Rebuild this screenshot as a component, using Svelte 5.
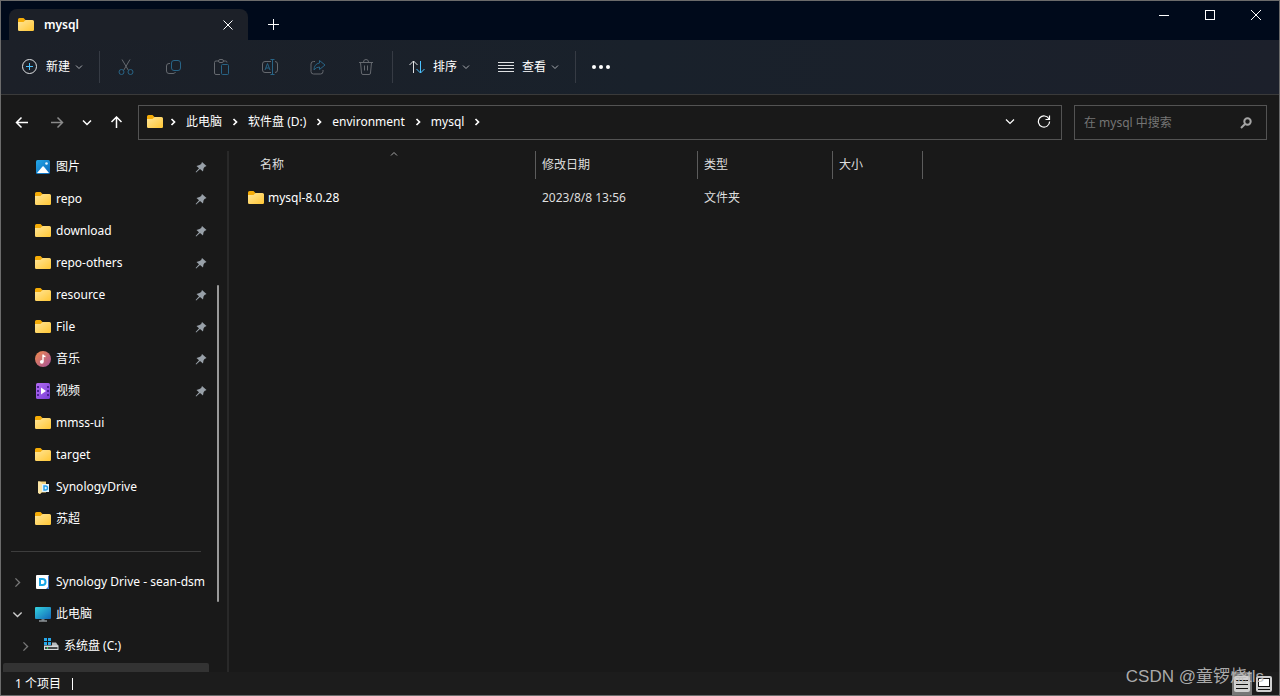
<script lang="ts">
  interface NavItem {
    name: string;
    icon: string;
    pinned?: boolean;
    tree?: 'closed' | 'open';
    nested?: boolean;
  }

  const quickAccess: NavItem[] = [
    { name: '图片', icon: 'pictures', pinned: true },
    { name: 'repo', icon: 'folder', pinned: true },
    { name: 'download', icon: 'folder', pinned: true },
    { name: 'repo-others', icon: 'folder', pinned: true },
    { name: 'resource', icon: 'folder', pinned: true },
    { name: 'File', icon: 'folder', pinned: true },
    { name: '音乐', icon: 'music', pinned: true },
    { name: '视频', icon: 'video', pinned: true },
    { name: 'mmss-ui', icon: 'folder' },
    { name: 'target', icon: 'folder' },
    { name: 'SynologyDrive', icon: 'synofolder' },
    { name: '苏超', icon: 'folder' }
  ];

  const drives: NavItem[] = [
    { name: 'Synology Drive - sean-dsm', icon: 'synology', tree: 'closed' },
    { name: '此电脑', icon: 'pc', tree: 'open' },
    { name: '系统盘 (C:)', icon: 'disk', tree: 'closed', nested: true }
  ];

  const crumbs = ['此电脑', '软件盘 (D:)', 'environment', 'mysql'];

  const actions = [
    { id: 'cut', label: '剪切' },
    { id: 'copy', label: '复制' },
    { id: 'paste', label: '粘贴' },
    { id: 'rename', label: '重命名' },
    { id: 'share', label: '共享' },
    { id: 'delete', label: '删除' }
  ];

  const files = [{ name: 'mysql-8.0.28', modified: '2023/8/8 13:56', type: '文件夹', size: '' }];

  let query = $state('');
</script>

{#snippet chevron(dir: string)}
  <svg class="chevron {dir}" viewBox="0 0 8 8" aria-hidden="true"><path d="M1 2.5 4 5.5 7 2.5" /></svg>
{/snippet}

{#snippet icon(name: string)}
  <svg class="icon" viewBox="0 0 16 16" aria-hidden="true">
    {#if name === 'folder'}
      <path d="M0 2.500A1.500 1.500 0 0 1 1.500 1h4L7.500 3v3H0z" fill="#f5ac07" />
      <path d="M0 5h5.500l2-2h7A1.500 1.500 0 0 1 16 4.500v8.300a1.200 1.200 0 0 1-1.200 1.200H1.200A1.200 1.200 0 0 1 0 12.800z" fill="url(#folder-fill)" />
    {:else if name === 'pictures'}
      <rect x="1" y="1" width="14" height="14" rx="1.500" fill="url(#sky-fill)" />
      <path d="m2 14 5.500-6.500a.8.8 0 0 1 1.200 0L14 14z" fill="#fff" />
      <circle cx="11.500" cy="4.500" r="1.300" fill="#e8f6ff" />
    {:else if name === 'music'}
      <circle cx="8" cy="8" r="8" fill="url(#music-fill)" />
      <path d="M8 3.500v7M8 3.500q0 2 2.500 2" fill="none" stroke="#fff" stroke-width="1.400" />
      <circle cx="6.800" cy="10.800" r="1.900" fill="#fff" />
    {:else if name === 'video'}
      <rect x="1" y="0" width="14" height="16" rx="1.500" fill="url(#video-fill)" />
      <path d="M2 4h2M2 8h2M2 12h2M12 4h2M12 8h2M12 12h2" stroke="#4d2394" stroke-width="2" />
      <path d="m6 4.500 5 3.500-5 3.500z" fill="#fff" />
    {:else if name === 'synofolder'}
      <path d="M3 2.500h8v11H6L5 15l-2-1.500z" fill="#f4d27b" />
      <path d="M3 2.500h2L7 4v9l-2 2-2-1z" fill="#fbe5a5" />
      <rect x="7" y="5" width="7" height="8" fill="#e5f3fc" />
      <path d="M9 7h1.500q2 0 2 2t-2 2H9z" fill="none" stroke="#229ee8" stroke-width="1.400" />
    {:else if name === 'synology'}
      <rect x="1" y="1" width="13" height="14" rx="1" fill="#fff" />
      <path d="M13 2v11l-2 2h2q1 0 1-1V2z" fill="#3d74cb" />
      <path d="M5 5h2.500q3 0 3 3t-3 3H5z" fill="none" stroke="#19a6e6" stroke-width="2" />
    {:else if name === 'pc'}
      <rect x="0" y="1" width="16" height="12" rx="1" fill="url(#screen-fill)" />
      <path d="M6.500 13h3v1.500h-3z" fill="#6d7a83" />
      <path d="M4 15h8" stroke="#c7d0d6" />
    {:else if name === 'disk'}
      <path d="M1 0h3v3H1zM5 0h3v3H5zM1 4h3v3H1zM5 4h3v3H5z" fill="#28a8ea" />
      <path d="M9 4.500h4l2.500 3.500H9z" fill="#b4b8bb" />
      <path d="M1 7.500h14.500V12H1z" fill="#d7dadc" />
      <path d="M2 9h12.500v2H2z" fill="#46494b" />
      <path d="M4 9h1v2H4z" fill="#3fd95b" />
    {/if}
  </svg>
{/snippet}

{#snippet actionIcon(name: string)}
  <svg class="tool" viewBox="0 0 16 16" aria-hidden="true">
    {#if name === 'cut'}
      <path d="m4 .5 6.500 11M12 .5 5.500 11.500" />
      <g class="accent"><circle cx="3.500" cy="13" r="2.500" /><circle cx="12.500" cy="13" r="2.500" /></g>
    {:else if name === 'copy'}
      <path d="M4 4.500H3A2.500 2.500 0 0 0 .5 7v5A2.500 2.500 0 0 0 3 14.500h4A2.500 2.500 0 0 0 9.500 13" />
      <rect class="accent" x="5.500" y="1.500" width="9" height="10" rx="2.500" />
    {:else if name === 'paste'}
      <path d="M6 15.500H2A1.500 1.500 0 0 1 .5 14V3.500A1.500 1.500 0 0 1 2 2h2.500m5 0h2A1.500 1.500 0 0 1 13 3.500" />
      <rect x="4.500" y=".5" width="5" height="3" rx="1.500" />
      <rect class="accent" x="7.500" y="5.500" width="7" height="10" rx="1" />
    {:else if name === 'rename'}
      <path d="M9 2.500H3A2.500 2.500 0 0 0 .5 5v6A2.500 2.500 0 0 0 3 13.500h6m4-11A2.500 2.500 0 0 1 15.500 5v6a2.500 2.500 0 0 1-2.500 2.500" />
      <path class="accent" d="m3 11 2.500-6.500L8 11M4 9h3M10.500 .5v15M8.500 .5h4M8.500 15.500h4" />
    {:else if name === 'share'}
      <path d="M5 2.500H3.500A2.500 2.500 0 0 0 1 5v7.500A2.500 2.500 0 0 0 3.500 15h7a2.500 2.500 0 0 0 2.500-2.500V11" />
      <path class="accent" d="M9.500 1.500 15 6l-5.500 4.500V8Q6 8 4 11q0-6 5.500-7z" />
    {:else if name === 'delete'}
      <path d="M1 3.500h14M5.500 3Q5.500.5 8 .5T10.500 3M2.500 3.500l1 10.500A1.500 1.500 0 0 0 5 15.500h6a1.500 1.500 0 0 0 1.500-1.500l1-10.500M6.500 6.500v5M9.500 6.500v5" />
    {/if}
  </svg>
{/snippet}

{#snippet navRow(item: NavItem)}
  <li>
    <button class="nav-row" class:nested={item.nested}>
      <span class="twisty" class:open={item.tree === 'open'}>
        {#if item.tree}{@render chevron(item.tree === 'open' ? 'down' : 'right')}{/if}
      </span>
      {@render icon(item.icon)}
      <span class="nav-name">{item.name}</span>
      {#if item.pinned}
        <svg class="pin" viewBox="0 0 12 12" aria-hidden="true">
          <path d="M7 1 11.500 5 9.500 6 8.500 7.500 8 10.500 5 8 1.200 11.500.6 11 4 7.200 1.500 5 4.500 4 6.200 3z" />
        </svg>
      {/if}
    </button>
  </li>
{/snippet}

<svg class="defs" aria-hidden="true">
  <defs>
    <linearGradient id="folder-fill" x1="0" y1="0" x2="1" y2="1">
      <stop offset="0" stop-color="#ffe69a" /><stop offset="1" stop-color="#ffc634" />
    </linearGradient>
    <linearGradient id="sky-fill" x1="0" y1="0" x2="1" y2="1">
      <stop offset="0" stop-color="#24a8e8" /><stop offset="1" stop-color="#0c66b8" />
    </linearGradient>
    <linearGradient id="music-fill" x1="0" y1="0" x2="1" y2="1">
      <stop offset="0" stop-color="#f08a4b" /><stop offset="1" stop-color="#a5529b" />
    </linearGradient>
    <linearGradient id="video-fill" x1="0" y1="0" x2="1" y2="1">
      <stop offset="0" stop-color="#b36bf2" /><stop offset="1" stop-color="#7a3fd6" />
    </linearGradient>
    <linearGradient id="screen-fill" x1="0" y1="0" x2="1" y2="1">
      <stop offset="0" stop-color="#35d3df" /><stop offset="1" stop-color="#1267b8" />
    </linearGradient>
  </defs>
</svg>

<div class="window">
  <header class="titlebar">
    <div class="tab">
      {@render icon('folder')}
      <span class="tab-title">mysql</span>
      <button class="tab-close" aria-label="关闭标签页">
        <svg class="glyph" viewBox="0 0 10 10"><path d="m.5.5 9 9M9.500.5l-9 9" /></svg>
      </button>
    </div>
    <button class="tab-add" aria-label="新标签页">
      <svg class="glyph wide" viewBox="0 0 11 11"><path d="M5.500 0v11M0 5.500h11" /></svg>
    </button>
    <div class="window-controls">
      <button aria-label="最小化"><svg class="glyph" viewBox="0 0 10 10"><path d="M0 5.500h10" /></svg></button>
      <button aria-label="最大化"><svg class="glyph" viewBox="0 0 10 10"><rect x=".5" y=".5" width="9" height="9" /></svg></button>
      <button aria-label="关闭"><svg class="glyph" viewBox="0 0 10 10"><path d="m0 0 10 10M10 0 0 10" /></svg></button>
    </div>
  </header>

  <div class="toolbar">
    <button class="menu">
      <svg class="tool on" viewBox="0 0 16 16" aria-hidden="true">
        <circle cx="7.500" cy="7.500" r="7" /><path class="accent" d="M7.500 4v7M4 7.500h7" />
      </svg>
      新建 {@render chevron('down')}
    </button>
    <span class="split"></span>
    <div class="actions">
      {#each actions as action}
        <button class="action" disabled aria-label={action.label} title={action.label}>{@render actionIcon(action.id)}</button>
      {/each}
    </div>
    <span class="split"></span>
    <button class="menu">
      <svg class="tool on" viewBox="0 0 16 16" aria-hidden="true">
        <path d="M4.500 2v12M.5 6l4-4 4 4" /><path class="accent" d="M11.500 2v12M7.500 10l4 4 4-4" />
      </svg>
      排序 {@render chevron('down')}
    </button>
    <button class="menu view">
      <svg class="tool on" viewBox="0 0 16 16" aria-hidden="true"><path d="M0 3.500h16M0 6.500h16M0 9.500h16M0 12.500h16" /></svg>
      查看 {@render chevron('down')}
    </button>
    <span class="split"></span>
    <button class="more" aria-label="查看更多"><i></i><i></i><i></i></button>
  </div>

  <div class="location">
    <nav class="history" aria-label="导航">
      <button aria-label="后退"><svg class="arrow" viewBox="0 0 14 14"><path d="M13 6.500H1.500M6.500 1.500l-5 5 5 5" /></svg></button>
      <button class="dim" aria-label="前进"><svg class="arrow" viewBox="0 0 14 14"><path d="M1 6.500h11.500M7.500 1.500l5 5-5 5" /></svg></button>
      <button class="recent" aria-label="最近浏览的位置"><svg class="arrow" viewBox="0 0 14 14"><path d="m3 4.500 4 4 4-4" /></svg></button>
      <button aria-label="上移"><svg class="arrow" viewBox="0 0 14 14"><path d="M6.500 12V1M1.500 6l5-5 5 5" /></svg></button>
    </nav>
    <div class="address">
      {@render icon('folder')}
      {@render chevron('right')}
      {#each crumbs as crumb}
        <button class="crumb">{crumb}</button>
        {@render chevron('right')}
      {/each}
      <div class="address-tools">
        <button aria-label="以前的位置"><svg class="arrow thin" viewBox="0 0 14 14"><path d="m3 4.500 4 4 4-4" /></svg></button>
        <button aria-label="刷新">
          <svg class="arrow thin" viewBox="0 0 14 14"><path d="M12 4A5.600 5.600 0 1 0 12.600 6.500M12.500 .5v4h-4" /></svg>
        </button>
      </div>
    </div>
    <label class="search">
      <input type="text" placeholder="在 mysql 中搜索" aria-label="搜索" bind:value={query} />
      <svg class="lens" viewBox="0 0 12 12" aria-hidden="true"><circle cx="7.500" cy="4.500" r="3.200" /><path d="M5 7 1 11" /></svg>
    </label>
  </div>

  <div class="body">
    <aside class="sidebar">
      <div class="nav">
        <ul>
          {#each quickAccess as item}{@render navRow(item)}{/each}
        </ul>
        <hr />
        <ul>
          {#each drives as item}{@render navRow(item)}{/each}
        </ul>
        <div class="selected-row"></div>
      </div>
      <div class="scrollbar"></div>
    </aside>

    <main class="content">
      <table>
        <colgroup><col class="c-name" /><col class="c-date" /><col class="c-type" /><col class="c-size" /></colgroup>
        <thead>
          <tr>
            <th aria-sort="ascending">名称 {@render chevron('up')}</th>
            <th>修改日期</th>
            <th>类型</th>
            <th>大小</th>
          </tr>
        </thead>
        <tbody>
          {#each files as file}
            <tr>
              <td><a class="file" href="#{file.name}">{@render icon('folder')}{file.name}</a></td>
              <td>{file.modified}</td>
              <td>{file.type}</td>
              <td>{file.size}</td>
            </tr>
          {/each}
        </tbody>
      </table>
    </main>
  </div>

  <footer class="status">
    <span class="count">1 个项目</span>
    <span class="caret"></span>
    <div class="views">
      <button class="active" aria-label="详细信息">
        <svg viewBox="0 0 16 16"><rect width="16" height="16" rx="2" fill="#d0d0d0" /><path d="M2 4.500h12M2 8.500h12M2 12.500h12" stroke="#111" /></svg>
      </button>
      <button aria-label="大缩略图">
        <svg viewBox="0 0 16 16"><rect width="16" height="16" rx="2" fill="#d0d0d0" /><rect x="2.500" y="2.500" width="11" height="8" fill="#fff" stroke="#111" /><path d="M2 13.500h12" stroke="#111" /></svg>
      </button>
    </div>
  </footer>

  <span class="watermark">CSDN @童锣烧tls</span>
</div>

<style>
  :global(body) {
    margin: 0;
    background: #191919;
  }

  .window {
    position: relative;
    box-sizing: border-box;
    height: 100vh;
    display: flex;
    flex-direction: column;
    border: 1px solid #6b6b6b;
    background: #191919;
    color: #fff;
    font: 12px/16px "Noto Sans", "Noto Sans CJK SC", sans-serif;
    overflow: hidden;
  }

  button {
    display: flex;
    align-items: center;
    padding: 0;
    border: 0;
    background: none;
    color: inherit;
    font: inherit;
  }

  svg {
    flex: none;
    display: block;
  }

  .defs {
    position: absolute;
    width: 0;
    height: 0;
  }

  .icon,
  .tool {
    width: 16px;
    height: 16px;
  }

  .chevron,
  .tool,
  .glyph,
  .arrow,
  .lens {
    fill: none;
    stroke: currentColor;
  }

  .chevron {
    width: 8px;
    height: 8px;
  }

  .chevron.right {
    transform: rotate(-90deg);
  }

  .chevron.up {
    transform: rotate(180deg);
  }

  /* title bar */
  .titlebar {
    display: flex;
    align-items: flex-end;
    height: 39px;
    background: #000a1b;
  }

  .tab {
    display: flex;
    align-items: center;
    gap: 10px;
    box-sizing: border-box;
    width: 239px;
    height: 31px;
    margin-left: 8px;
    padding: 0 15px 0 9px;
    border-radius: 8px 8px 0 0;
    background: #1c2028;
  }

  .tab-title {
    flex: 1;
    font-weight: 600;
  }

  .glyph {
    width: 10px;
    height: 10px;
  }

  .glyph.wide {
    width: 11px;
    height: 11px;
  }

  .tab-add {
    height: 31px;
    margin-left: 20px;
  }

  .window-controls {
    display: flex;
    align-self: flex-start;
    margin-left: auto;
  }

  .window-controls button {
    justify-content: center;
    width: 46px;
    height: 28px;
  }

  /* command bar */
  .toolbar {
    display: flex;
    align-items: center;
    height: 54px;
    border-bottom: 1px solid #3a3a3a;
    background: linear-gradient(90deg, #1c2028, #19212b 50%, #1c202b);
  }

  .menu {
    gap: 8px;
    margin: 0 16px 0 21px;
  }

  .menu .chevron {
    margin-left: -3px;
    color: #a8abb0;
  }

  .menu.view {
    margin-left: 12px;
  }

  .split {
    width: 1px;
    height: 32px;
    background: #363b44;
  }

  .split + .menu {
    margin-left: 16px;
  }

  .actions {
    display: flex;
    gap: 16px;
    padding: 0 10px;
  }

  .action {
    justify-content: center;
    width: 32px;
    height: 32px;
    color: #65696f;
  }

  .accent {
    stroke: #286486;
  }

  .tool.on {
    color: #dfe1e3;
  }

  .tool.on .accent {
    stroke: #4cc2ff;
  }

  .more {
    gap: 3px;
    margin-left: 16px;
  }

  .more i {
    width: 4px;
    height: 4px;
    border-radius: 50%;
    background: #fff;
  }

  /* address row */
  .location {
    display: flex;
    align-items: center;
    gap: 12px;
    padding: 10px 12px 11px 14px;
  }

  .history {
    display: flex;
    gap: 16px;
    width: 111px;
  }

  .history button:nth-child(2) {
    margin-left: 5px;
  }

  .arrow {
    width: 14px;
    height: 14px;
    stroke-width: 1.5;
  }

  .arrow.thin {
    stroke-width: 1.2;
  }

  .dim {
    color: #8a8a8a;
  }

  .address,
  .search {
    box-sizing: border-box;
    height: 35px;
    display: flex;
    align-items: center;
    border: 1px solid #535353;
  }

  .address {
    flex: 1;
    gap: 9px;
    padding: 0 10px 1px 8px;
  }

  .address .icon {
    margin-right: -3px;
  }

  .address .chevron {
    stroke-width: 1.7;
  }

  .address-tools {
    display: flex;
    gap: 20px;
    margin-left: auto;
  }

  .search {
    width: 193px;
    padding: 0 14px 0 9px;
  }

  .search input {
    flex: 1;
    min-width: 0;
    padding: 0;
    border: 0;
    outline: 0;
    background: none;
    color: #fff;
    font: inherit;
  }

  .search input::placeholder {
    color: #757575;
    opacity: 1;
  }

  .lens {
    width: 12px;
    height: 12px;
    color: #a5a5a5;
    stroke-width: 2;
  }

  /* navigation pane */
  .body {
    flex: 1;
    display: flex;
    min-height: 0;
  }

  .sidebar {
    display: flex;
    width: 226px;
    border-right: 2px solid #292929;
    overflow: hidden;
  }

  .nav {
    width: 208px;
    overflow: hidden;
  }

  .nav ul {
    margin: 0;
    padding: 0;
    list-style: none;
  }

  .nav-row {
    width: 100%;
    height: 32px;
    padding: 0 2px 0 11px;
    text-align: left;
  }

  .nav-row.nested {
    padding-left: 19px;
  }

  .twisty {
    width: 23px;
    color: #777;
  }

  .twisty .chevron {
    width: 11px;
    height: 11px;
  }

  .twisty.open {
    color: #ccc;
  }

  .nav-name {
    flex: 1;
    margin-left: 5px;
    overflow: hidden;
    white-space: nowrap;
  }

  .pin {
    width: 12px;
    height: 12px;
    fill: #98a0a8;
  }

  .nav hr {
    height: 1px;
    margin: 16px 8px 14px 10px;
    border: 0;
    background: #3d3d3d;
  }

  .selected-row {
    height: 32px;
    margin: 1px 0 0 2px;
    border-radius: 2px;
    background: #333;
  }

  .scrollbar {
    width: 2px;
    height: 317px;
    margin: 134px 0 0 8px;
    border-radius: 1px;
    background: #9a9a9a;
  }

  /* file list */
  .content {
    flex: 1;
    min-width: 0;
    padding-left: 12px;
  }

  table {
    width: 682px;
    table-layout: fixed;
    border-collapse: separate;
    border-spacing: 0;
  }

  .c-name {
    width: 295px;
  }

  .c-date {
    width: 162px;
  }

  .c-type {
    width: 135px;
  }

  .c-size {
    width: 90px;
  }

  th {
    position: relative;
    height: 28px;
    padding: 0 0 0 6px;
    border-right: 1px solid #5c5c5c;
    color: #dedede;
    font-weight: 400;
    text-align: left;
  }

  th:first-child {
    padding-left: 19px;
  }

  th .chevron {
    position: absolute;
    top: -1px;
    left: 149px;
    color: #a5a5a5;
  }

  td {
    height: 38px;
    padding: 0 0 0 6px;
    color: #dedede;
  }

  td:first-child {
    padding-left: 7px;
  }

  .file {
    display: flex;
    align-items: center;
    gap: 4px;
    color: #fff;
    text-decoration: none;
  }

  /* status bar */
  .status {
    display: flex;
    align-items: center;
    height: 23px;
    padding: 0 7px 0 14px;
    background: #1c1c1c;
  }

  .caret {
    width: 1px;
    height: 12px;
    margin-left: 11px;
    background: #fff;
  }

  .views {
    display: flex;
    gap: 4px;
    margin-left: auto;
  }

  .views button {
    justify-content: center;
    height: 23px;
  }

  .views svg {
    width: 16px;
    height: 16px;
  }

  .views .active {
    width: 20px;
    background: #777;
  }

  .watermark {
    position: absolute;
    right: 15px;
    bottom: 6px;
    color: rgba(190, 190, 190, 0.9);
    font: 17px/24px "Liberation Sans", "Noto Sans CJK SC", sans-serif;
    pointer-events: none;
  }
</style>
